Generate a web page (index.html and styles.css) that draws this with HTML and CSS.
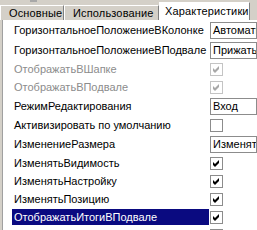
FILE: index.html
```html
<!DOCTYPE html>
<html lang="ru">

<head>
    <meta charset="UTF-8">
    <title>Характеристики</title>
    <link rel="stylesheet" href="styles.css">
</head>

<body>
    <div class="topbar"><span class="grip"></span></div>
    <div class="tabs">
        <div class="tab tab-main">Основные</div>
        <div class="tab tab-use">Использование</div>
        <div class="tab tab-props active">Характеристики</div>
    </div>
    <div class="panel">
        <div class="row combo-row">
            <div class="label">ГоризонтальноеПоложениеВКолонке</div>
            <div class="value"><div class="combo">Автоматически</div></div>
        </div>
        <div class="row combo-row">
            <div class="label">ГоризонтальноеПоложениеВПодвале</div>
            <div class="value"><div class="combo">Прижать</div></div>
        </div>
        <div class="row disabled">
            <div class="label">ОтображатьВШапке</div>
            <div class="value"><span class="check on"><svg viewBox="0 0 11 11"><polygon points="2,4 4,6 8,2 8,5 4,9 2,7"/></svg></span></div>
        </div>
        <div class="row disabled">
            <div class="label">ОтображатьВПодвале</div>
            <div class="value"><span class="check on"><svg viewBox="0 0 11 11"><polygon points="2,4 4,6 8,2 8,5 4,9 2,7"/></svg></span></div>
        </div>
        <div class="row combo-row">
            <div class="label">РежимРедактирования</div>
            <div class="value"><div class="combo">Вход</div></div>
        </div>
        <div class="row">
            <div class="label">Активизировать по умолчанию</div>
            <div class="value"><span class="check"></span></div>
        </div>
        <div class="row combo-row">
            <div class="label">ИзменениеРазмера</div>
            <div class="value"><div class="combo">Изменять</div></div>
        </div>
        <div class="row">
            <div class="label">ИзменятьВидимость</div>
            <div class="value"><span class="check on"><svg viewBox="0 0 11 11"><polygon points="2,4 4,6 8,2 8,5 4,9 2,7"/></svg></span></div>
        </div>
        <div class="row">
            <div class="label">ИзменятьНастройку</div>
            <div class="value"><span class="check on"><svg viewBox="0 0 11 11"><polygon points="2,4 4,6 8,2 8,5 4,9 2,7"/></svg></span></div>
        </div>
        <div class="row">
            <div class="label">ИзменятьПозицию</div>
            <div class="value"><span class="check on"><svg viewBox="0 0 11 11"><polygon points="2,4 4,6 8,2 8,5 4,9 2,7"/></svg></span></div>
        </div>
        <div class="row selected">
            <div class="label">ОтображатьИтогиВПодвале</div>
            <div class="value"><span class="check on"><svg viewBox="0 0 11 11"><polygon points="2,4 4,6 8,2 8,5 4,9 2,7"/></svg></span></div>
        </div>
        <div class="row">
            <div class="label"></div>
            <div class="value"><span class="check"></span></div>
        </div>
    </div>
</body>

</html>
```

FILE: styles.css
```css
html, body {
    margin: 0;
    height: 100%;
    overflow: hidden;
}
body {
    font-family: "Liberation Sans", Arial, sans-serif;
    font-size: 11px;
    color: #000;
    background-color: #d4d0c8;
}
.topbar {
    height: 2px;
    display: flex;
}
.grip {
    margin-left: 30px;
    width: 7px;
    background-color: #a8a8a8;
}
.tabs {
    display: flex;
    align-items: flex-end;
    height: 18px;
    letter-spacing: 0.15px;
}
.tab {
    box-sizing: border-box;
    height: 15px;
    line-height: 14px;
    padding-left: 8px;
    border-top: 1px solid #fff;
    border-left: 1px solid #fff;
    border-right: 1px solid #808080;
    white-space: nowrap;
    overflow: hidden;
}
.tab-main {
    width: 64px;
}
.tab-use {
    width: 95px;
}
.tab-props {
    width: 91px;
}
.tab.active {
    height: 18px;
    line-height: 16px;
    padding-left: 5px;
    background-color: #fff;
}
.panel {
    margin-left: 2px;
    border-left: 1px solid #a0a0a0;
    background-color: #fff;
    height: 100%;
}
.row {
    display: flex;
    align-items: center;
    height: 18px;
    padding-left: 9px;
}
.combo-row {
    height: 20px;
}
.label {
    width: 197px;
    height: 16px;
    line-height: 16px;
    padding-left: 2px;
    box-sizing: border-box;
    white-space: nowrap;
    overflow: hidden;
}
.value {
    flex: 1;
    padding-left: 1px;
    display: flex;
    align-items: center;
    min-width: 0;
}
.combo {
    box-sizing: border-box;
    width: 100px;
    height: 17px;
    line-height: 15px;
    padding-left: 2px;
    border: 1px solid #8c8c8c;
    white-space: nowrap;
    overflow: hidden;
}
.check {
    box-sizing: border-box;
    width: 13px;
    height: 13px;
    border: 1px solid #8c8c8c;
    display: flex;
}
.check svg {
    width: 11px;
    height: 11px;
    fill: #000;
}
.disabled .label {
    color: #8c8c8c;
}
.disabled .check {
    border-color: #c4c4c4;
}
.disabled .check svg {
    fill: #a8a8a8;
}
.selected .label {
    background-color: #0a0a80;
    color: #fff;
}
```
